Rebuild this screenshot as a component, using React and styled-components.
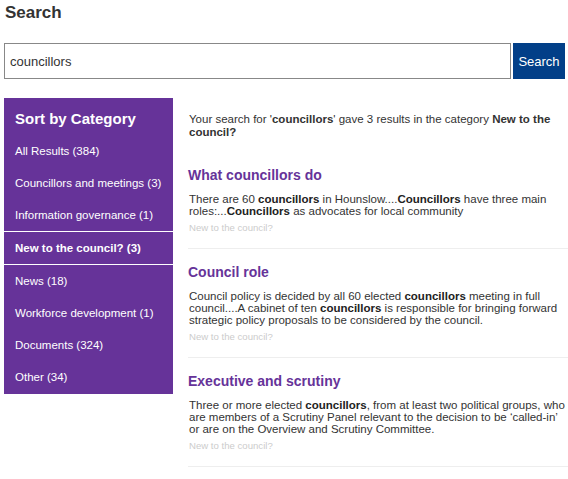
import React from "react"
import styled, { createGlobalStyle } from "styled-components"

const GlobalStyle = createGlobalStyle`
  body {
    margin: 0;
    background: #fff;
    font-family: "Liberation Sans", Arial, sans-serif;
    color: #333;
  }
`

const Page = styled.div`
  padding-left: 4px;
`

const Heading = styled.h1`
  margin: 3px 0 0 1px;
  font-size: 17px;
  line-height: 20px;
  font-weight: bold;
  color: #333;
`

const SearchRow = styled.form`
  display: flex;
  gap: 2px;
  margin: 20px 3px 19px 0;
  height: 36px;
`

const SearchInput = styled.input`
  flex: 1;
  box-sizing: border-box;
  height: 36px;
  margin: 0;
  padding: 0 5px;
  border: 1px solid #888;
  font-family: inherit;
  font-size: 13px;
  color: #333;
  outline: none;
`

const SearchButton = styled.button`
  width: 52px;
  height: 36px;
  margin: 0;
  padding: 0;
  border: none;
  background: #023f88;
  color: #fff;
  font-family: inherit;
  font-size: 13px;
`

const Columns = styled.div`
  display: flex;
  align-items: flex-start;
  gap: 15px;
`

const Sidebar = styled.nav`
  flex: 0 0 169px;
  background: #663399;
  color: #fff;
  padding-bottom: 1px;
`

const SidebarTitle = styled.h2`
  margin: 0;
  padding: 12px 11px 8px;
  font-size: 15px;
  line-height: 17px;
  font-weight: bold;
`

const CategoryLink = styled.a`
  display: flex;
  align-items: center;
  height: 32px;
  padding-left: 11px;
  font-size: 11.5px;
  color: #fff;
  text-decoration: none;
  font-weight: ${p => (p.$active ? "bold" : "normal")};
  border-top: ${p => (p.$active ? "1px solid #fff" : "none")};
  border-bottom: ${p => (p.$active ? "1px solid #fff" : "none")};
`

const Main = styled.main`
  flex: 1;
  min-width: 0;
  padding-top: 15px;
`

const Intro = styled.p`
  margin: 0 0 13px 1px;
  font-size: 11.5px;
  line-height: 13px;
  padding-right: 10px;
`

const Result = styled.article`
  padding: 15px 0 14px;
  border-bottom: 1px solid #eee;
`

const ResultTitle = styled.h3`
  margin: 0 0 10px;
  font-size: 14px;
  line-height: 16px;
  font-weight: bold;
  color: #663399;
`

const Summary = styled.p`
  margin: 0 0 5px 1px;
  font-size: 11.5px;
  line-height: 12px;

  b {
    color: #222;
  }
`

const Tag = styled.div`
  margin-left: 1px;
  font-size: 9.6px;
  line-height: 12px;
  color: #ccc;
`

const categories = [
  { label: "All Results (384)" },
  { label: "Councillors and meetings (3)" },
  { label: "Information governance (1)" },
  { label: "New to the council? (3)", active: true },
  { label: "News (18)" },
  { label: "Workforce development (1)" },
  { label: "Documents (324)" },
  { label: "Other (34)" },
]

const results = [
  {
    title: "What councillors do",
    text: (
      <>
        There are 60 <b>councillors</b> in Hounslow....<b>Councillors</b> have three main
        roles:...<b>Councillors</b> as advocates for local community
      </>
    ),
  },
  {
    title: "Council role",
    text: (
      <>
        Council policy is decided by all 60 elected <b>councillors</b> meeting in full
        council....A cabinet of ten <b>councillors</b> is responsible for bringing forward
        strategic policy proposals to be considered by the council.
      </>
    ),
  },
  {
    title: "Executive and scrutiny",
    text: (
      <>
        Three or more elected <b>councillors</b>, from at least two political groups, who
        are members of a Scrutiny Panel relevant to the decision to be ‘called-in’ or are
        on the Overview and Scrutiny Committee.
      </>
    ),
  },
]

const App = () => {
  return (
    <Page>
      <GlobalStyle />
      <Heading>Search</Heading>
      <SearchRow onSubmit={e => e.preventDefault()}>
        <SearchInput defaultValue="councillors" />
        <SearchButton type="submit">Search</SearchButton>
      </SearchRow>
      <Columns>
        <Sidebar>
          <SidebarTitle>Sort by Category</SidebarTitle>
          {categories.map(c => (
            <CategoryLink key={c.label} href="#" $active={c.active}>
              {c.label}
            </CategoryLink>
          ))}
        </Sidebar>
        <Main>
          <Intro>
            Your search for '<b>councillors</b>' gave 3 results in the category{" "}
            <b>New to the council?</b>
          </Intro>
          {results.map(r => (
            <Result key={r.title}>
              <ResultTitle>{r.title}</ResultTitle>
              <Summary>{r.text}</Summary>
              <Tag>New to the council?</Tag>
            </Result>
          ))}
        </Main>
      </Columns>
    </Page>
  )
}

export default App
